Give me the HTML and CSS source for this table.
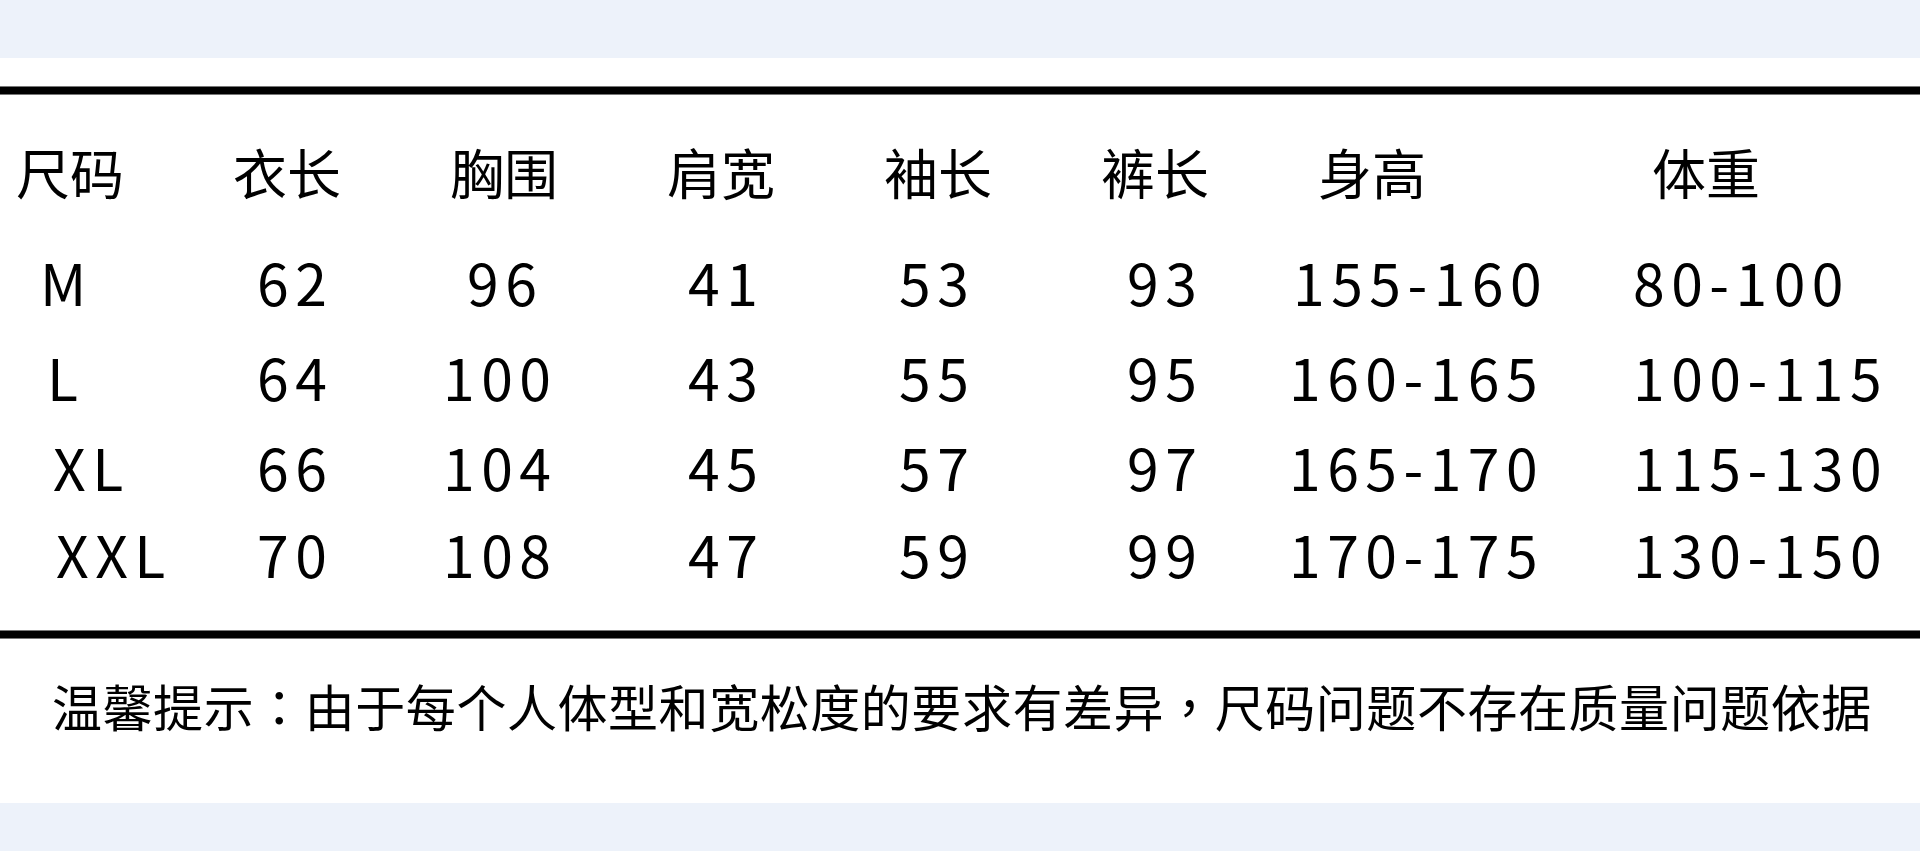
FILE: index.html
```html
<!DOCTYPE html>
<html lang="zh-CN">
<head>
<meta charset="utf-8">
<title>尺码表</title>
<link rel="stylesheet" href="styles.css">
</head>
<body>
<div class="page">
  <div class="band"></div>
  <main class="sheet">
    <div class="rule"></div>
    <div class="head">
      <span>尺码</span><span>衣长</span><span>胸围</span><span>肩宽</span><span>袖长</span><span>裤长</span><span>身高</span><span>体重</span>
    </div>
    <div class="grid">
      <span class="size size-m">M</span><span>62</span><span class="shift">96</span><span>41</span><span>53</span><span>93</span><span class="nudge">155-160</span><span>80-100</span>
      <span class="size size-l">L</span><span>64</span><span>100</span><span>43</span><span>55</span><span>95</span><span>160-165</span><span>100-115</span>
      <span class="size size-xl">XL</span><span>66</span><span>104</span><span>45</span><span>57</span><span>97</span><span>165-170</span><span>115-130</span>
      <span class="size size-xxl">XXL</span><span>70</span><span>108</span><span>47</span><span>59</span><span>99</span><span>170-175</span><span>130-150</span>
    </div>
    <div class="rule rule-bottom"></div>
    <p class="note">温馨提示<span class="punct" lang="zh-Hant">：</span>由于每个人体型和宽松度的要求有差异<span class="punct" lang="zh-Hant">，</span>尺码问题不存在质量问题依据</p>
  </main>
  <div class="band band-bottom"></div>
</div>
</body>
</html>
```
FILE: styles.css
```css
* { box-sizing: border-box; }
html, body { margin: 0; padding: 0; }
body {
  width: 1920px;
  height: 851px;
  overflow: hidden;
  background: #ffffff;
  color: #000;
  font-family: "Noto Sans CJK SC", "Noto Sans", sans-serif;
}
.page { display: flex; flex-direction: column; }
.band { height: 58px; background: #edf2fa; flex: none; }
.band-bottom { height: 49px; }
.sheet {
  background: #fff;
  padding: 28px 0 73px;
  display: flex;
  flex-direction: column;
  flex: none;
}
.rule {
  height: 9px;
  background: #000;
  border-top: 1px solid #777;
  border-bottom: 1px solid #777;
  flex: none;
}
.rule-bottom { margin-top: 18px; }
.head {
  margin-top: 50px;
  padding-left: 16px;
  display: grid;
  grid-template-columns: repeat(6, 217px) 334px 1fr;
  font-size: 54px;
  line-height: 54px;
  height: 54px;
}
.grid {
  margin-top: 54px;
  display: grid;
  grid-template-columns: 257px 186px 245px 211px 228px 162px 344px 1fr;
  grid-template-rows: 95px 90px 87px 87px;
  font-size: 57px;
  line-height: 57px;
  letter-spacing: 6.5px;
}
.grid span { white-space: nowrap; }
.size-m { padding-left: 40px; }
.size-l { padding-left: 47px; }
.size-xl { padding-left: 53px; }
.size-xxl { padding-left: 56px; }
.shift { padding-left: 24px; }
.nudge { padding-left: 4px; }
.note {
  margin: 41px 0 0;
  padding-left: 52px;
  font-size: 50px;
  line-height: 50px;
  letter-spacing: 0.55px;
  white-space: nowrap;
}
.punct { font-family: "Noto Sans CJK TC", "Noto Sans CJK SC", sans-serif; }
```
